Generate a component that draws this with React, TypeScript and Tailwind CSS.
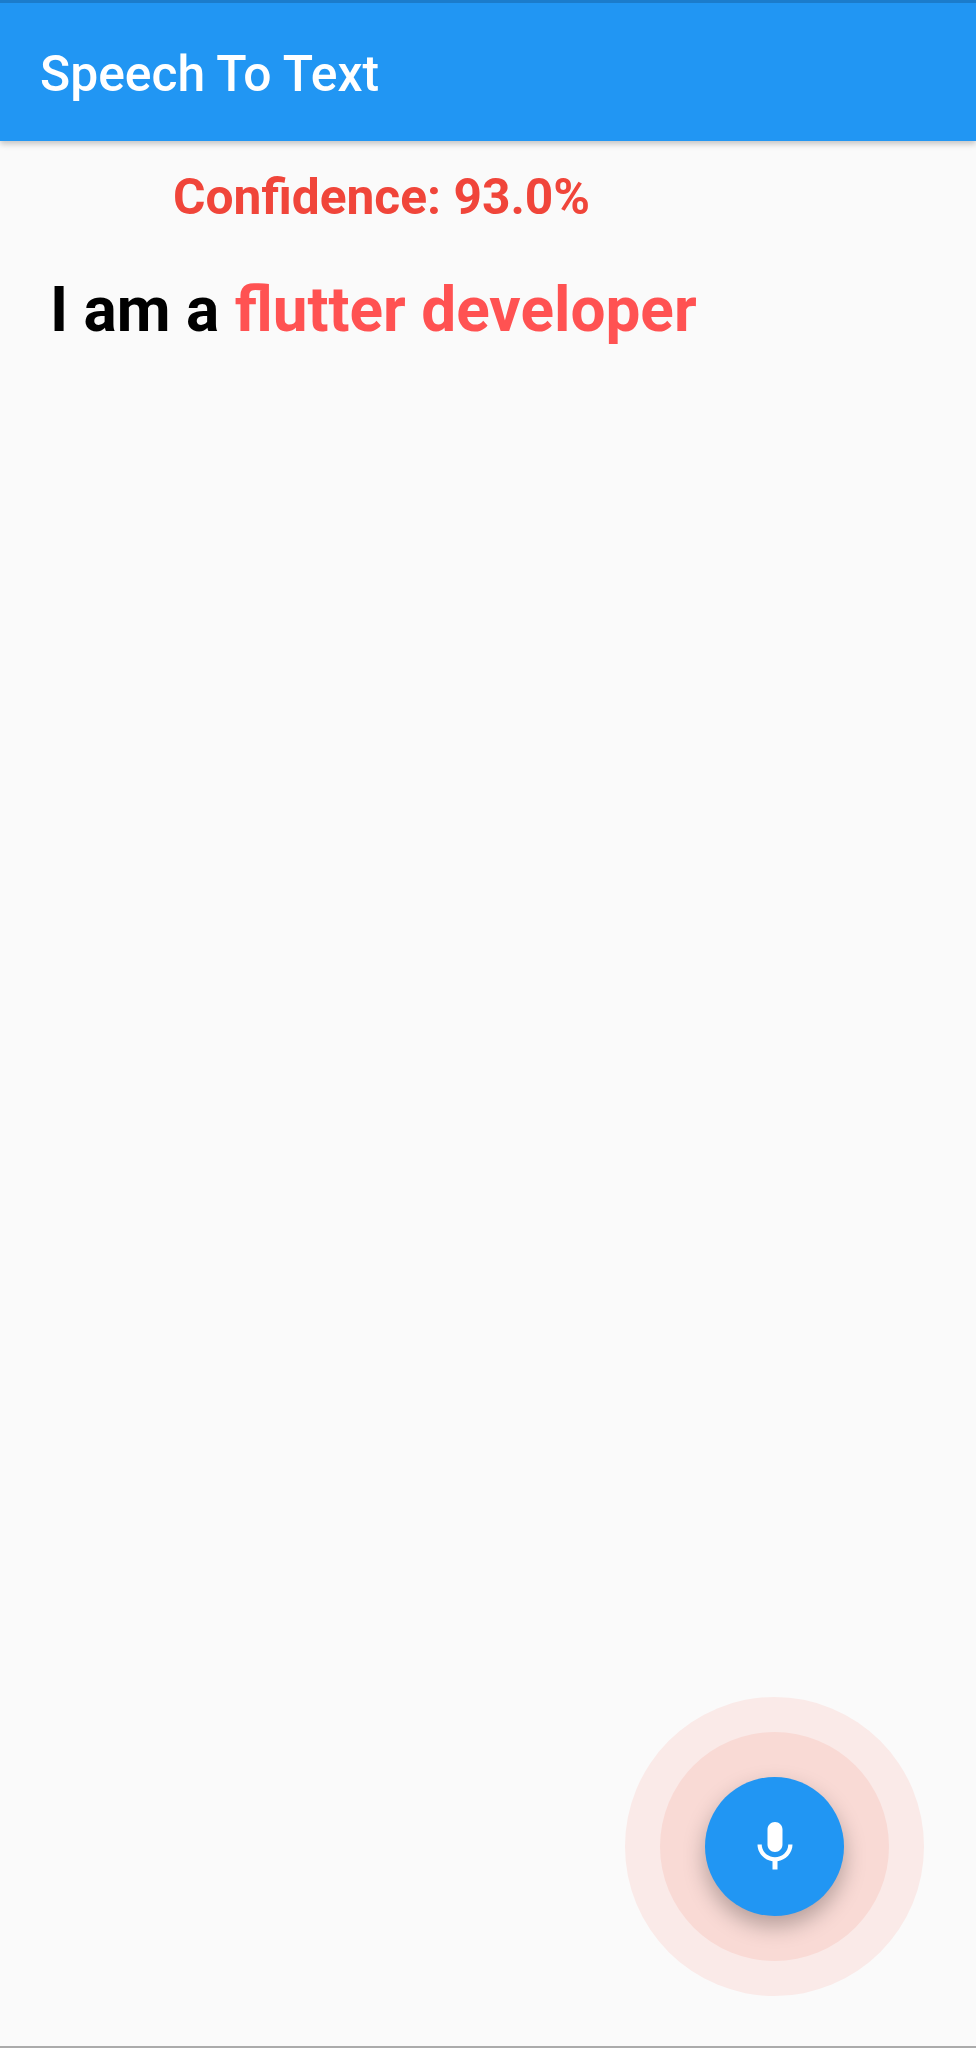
function MicIcon() {
  return (
    <svg viewBox="0 0 24 24" width="60" height="60" fill="#fff">
      <path d="M12 14c1.66 0 2.99-1.34 2.99-3L15 5c0-1.66-1.34-3-3-3S9 3.34 9 5v6c0 1.66 1.34 3 3 3zm5.3-3c0 3-2.54 5.1-5.3 5.1S6.7 14 6.7 11H5c0 3.41 2.72 6.23 6 6.72V21h2v-3.28c3.28-.48 6-3.3 6-6.72h-1.7z" />
    </svg>
  );
}

export default function App() {
  return (
    <div className="flex flex-col h-[2048px] w-[976px] bg-[#fafafa] overflow-hidden font-['Roboto',sans-serif]">
      <header className="h-[141px] shrink-0 bg-[#2196f3] flex flex-col shadow-[0_3px_6px_rgba(0,0,0,0.22)] z-10">
        <div className="h-[3px] shrink-0 bg-[#1b7ccb]" />
        <div className="flex-1 flex items-center px-10 pt-[6px]">
          <h1 className="text-[49.8px] font-medium text-white leading-none">Speech To Text</h1>
        </div>
      </header>

      <main className="flex-1 flex flex-col relative">
        <p className="text-[49.7px] font-bold text-[#f0453a] pl-[173px] pt-[28px] leading-[56px]">Confidence: 93.0%</p>
        <p className="text-[62.1px] font-bold text-black pl-[50px] pt-[49px] leading-[72px]">
          I am a <span className="text-[#ff5252]">flutter developer</span>
        </p>

        {/* Mic button with the listening glow */}
        <div className="absolute left-[625px] top-[1556px] w-[299px] h-[299px] rounded-full bg-[#faeae8] flex items-center justify-center">
          <div className="w-[229px] h-[229px] rounded-full bg-[#f9dad5] flex items-center justify-center">
            <button className="w-[139px] h-[139px] rounded-full bg-[#2196f3] flex items-center justify-center shadow-[0_10px_22px_rgba(0,0,0,0.28)]">
              <MicIcon />
            </button>
          </div>
        </div>
      </main>

      <div className="h-[2px] shrink-0 bg-[#ababab]" />
    </div>
  );
}
